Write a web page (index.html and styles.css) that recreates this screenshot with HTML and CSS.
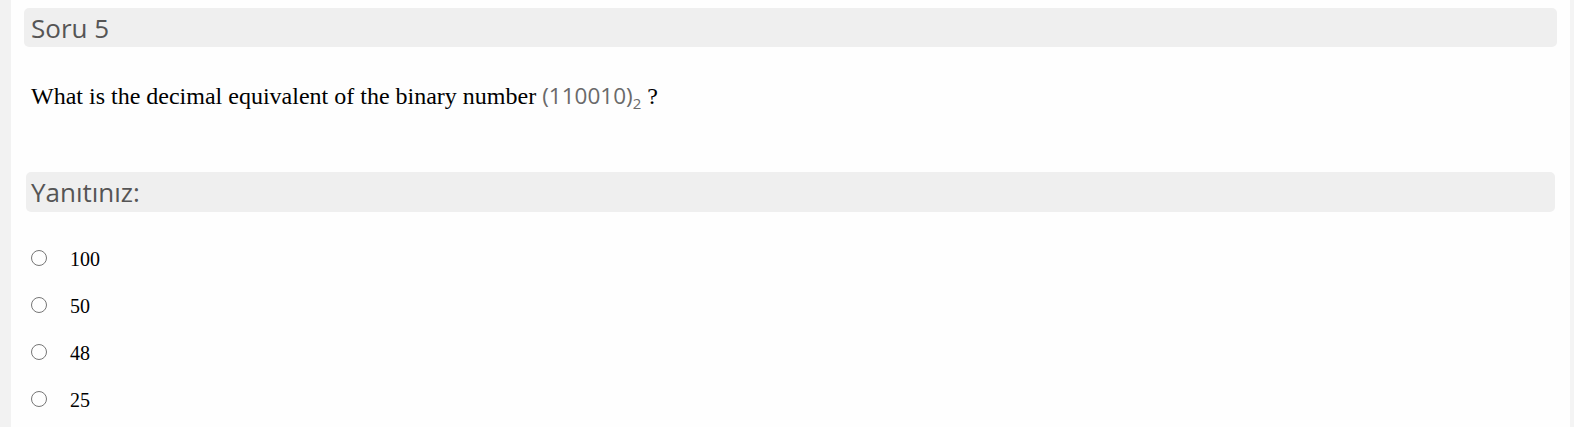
FILE: index.html
```html
<!DOCTYPE html>
<html>
<head>
<meta charset="utf-8">
<link rel="stylesheet" href="styles.css">
</head>
<body>
<div class="page">
  <div class="side-left"></div>
  <main class="panel">
    <div class="bar bar-q"><h2 class="bar-title">Soru 5</h2></div>
    <p class="question">What is the decimal equivalent of the binary number <span class="math">(110010)<sub>2</sub></span> ?</p>
    <div class="bar bar-a"><h2 class="bar-title">Yanıtınız:</h2></div>
    <ul class="options">
      <li class="option"><span class="radio"></span><span class="label">100</span></li>
      <li class="option"><span class="radio"></span><span class="label">50</span></li>
      <li class="option"><span class="radio"></span><span class="label">48</span></li>
      <li class="option"><span class="radio"></span><span class="label">25</span></li>
    </ul>
  </main>
  <div class="side-right"></div>
</div>
</body>
</html>
```
FILE: styles.css
```css
html, body { margin: 0; padding: 0; background: #fefefe; }
.page { display: flex; width: 1574px; height: 427px; overflow: hidden; }
.side-left { width: 11px; background: #f2f2f2; flex: none; }
.side-right { width: 4px; background: #f4f4f4; flex: none; }
.panel { flex: 1; padding: 8px 13px 0 13px; background: #fefefe; }
.bar { background: #efefef; border-radius: 5px; height: 39px; display: flex; align-items: center; padding-left: 7px; }
.bar-a { margin-left: 2px; margin-right: 2px; height: 40px; padding-left: 5px; }
.bar-title { margin: 0; font-family: "Open Sans", sans-serif; font-weight: 400; font-size: 26px; color: #555; line-height: 1; }
.question { margin: 35px 0 0 7px; font-family: "Liberation Serif", serif; font-size: 24px; line-height: 28px; color: #000; height: 90px; }
.math { font-family: "Open Sans", sans-serif; color: #6a6a6a; font-size: 22.5px; }
.math sub { font-size: 15px; line-height: 0; vertical-align: -5px; }
.options { list-style: none; margin: 24px 0 0 0; padding: 0; }
.option { display: flex; align-items: center; height: 47px; padding-left: 7px; }
.radio { box-sizing: border-box; width: 16px; height: 16px; border: 1px solid #767676; border-radius: 50%; flex: none; margin-top: -3px; }
.label { margin-left: 23px; font-family: "Liberation Serif", serif; font-size: 20px; color: #000; }
```
